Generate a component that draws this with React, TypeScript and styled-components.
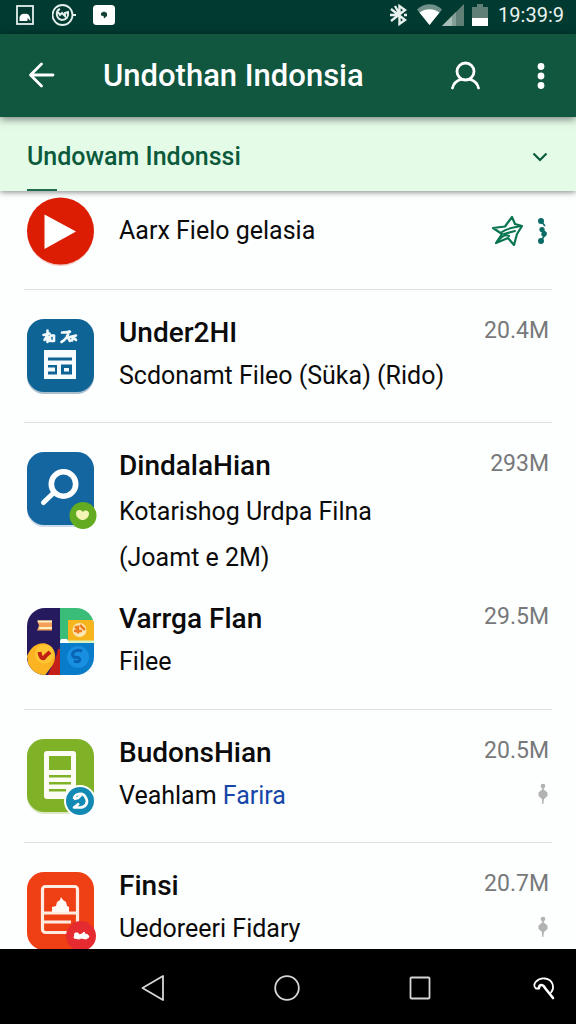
import React from "react";
import styled, { createGlobalStyle } from "styled-components";

const GlobalStyle = createGlobalStyle`
  *, *::before, *::after { box-sizing: border-box; }
  html, body, #root { height: 100%; }
  body { margin: 0; background: #fdfefe; font-family: Roboto, "Liberation Sans", sans-serif; color: #0b0b0b; }
  h1, h2, h3, p, ul { margin: 0; padding: 0; }
  svg { display: block; flex: none; }
`;

const Screen = styled.div`
  height: 100vh;
  display: flex;
  flex-direction: column;
`;

const StatusBar = styled.div`
  flex: none;
  display: flex;
  align-items: center;
  justify-content: space-between;
  height: 34px;
  padding: 0 12px 4px 14px;
  background: #013a30;
  color: #e9f2ef;
`;

const StatusGroup = styled.div<{ $gap: number }>`
  display: flex;
  align-items: center;
  gap: ${(p) => p.$gap}px;
`;

const Clock = styled.span`
  margin-left: 2px;
  font-size: 20px;
  line-height: 28px;
`;

const AppBar = styled.header`
  flex: none;
  position: relative;
  z-index: 2;
  display: flex;
  align-items: center;
  height: 83px;
  padding: 0 14px 0 22px;
  background: #11563f;
  color: #fff;
  box-shadow: 0 2px 8px rgba(0, 0, 0, 0.5);
`;

const AppTitle = styled.h1`
  flex: 1;
  margin-left: 41px;
  font-size: 31px;
  font-weight: 500;
  line-height: 42px;
  white-space: nowrap;
`;

const IconButton = styled.button`
  display: flex;
  align-items: center;
  justify-content: center;
  width: 40px;
  height: 48px;
  padding: 0;
  border: 0;
  background: none;
  color: inherit;
`;

const BarActions = styled.div`
  display: flex;
  gap: 36px;
  margin-right: 1px;
`;

const Section = styled.button`
  flex: none;
  position: relative;
  z-index: 1;
  display: flex;
  align-items: center;
  justify-content: space-between;
  width: 100%;
  height: 74px;
  padding: 6px 28px 0 27px;
  border: 0;
  background: #e4fbe8;
  box-shadow: 0 1px 6px rgba(0, 0, 0, 0.5);
  color: #0b5a3c;
  font: 500 25px/32px Roboto, "Liberation Sans", sans-serif;
  text-align: left;

  &::after {
    content: "";
    position: absolute;
    left: 27px;
    bottom: 0;
    width: 30px;
    height: 2px;
    background: #1f6d4d;
  }
`;

const List = styled.ul`
  flex: 1;
  min-height: 0;
  overflow: hidden;
  padding: 0 24px;
  list-style: none;
`;

const rowPadding = {
  lead: "6px 0 24px",
  open: "20px 0 2px",
  tight: "13px 0 27px",
  plain: "20px 0 26px",
};

const Row = styled.li<{ $kind?: "lead" | "open" | "tight" }>`
  display: flex;
  align-items: ${(p) => (p.$kind === "lead" ? "center" : "flex-start")};
  padding: ${(p) => rowPadding[p.$kind ?? "plain"]};
  border-bottom: ${(p) => (p.$kind === "open" ? "0" : "1px solid #dfe1e2")};
`;

const IconSlot = styled.div<{ $lead?: boolean }>`
  flex: none;
  width: 68px;
  height: ${(p) => (p.$lead ? 68 : 74)}px;
  margin: ${(p) => (p.$lead ? "0" : "9px")} 24px 0 3px;
  svg { overflow: visible; }
`;

const Body = styled.div`
  flex: 1;
  min-width: 0;
  white-space: nowrap;
`;

const Name = styled.h2`
  font-size: 28px;
  font-weight: 500;
  line-height: 46px;
`;

const Detail = styled.p<{ $tall?: boolean }>`
  font-size: 25px;
  line-height: ${(p) => (p.$tall ? 46 : 40)}px;
`;

const DetailLink = styled.a`
  color: #1746a8;
  text-decoration: none;
`;

const Side = styled.div`
  flex: none;
  display: flex;
  flex-direction: column;
  align-items: flex-end;
  padding-right: 3px;
`;

const Size = styled.span`
  font-size: 23px;
  line-height: 42px;
  color: #77797a;
`;

const MarkButton = styled.button`
  display: flex;
  align-items: center;
  justify-content: center;
  width: 12px;
  height: 44px;
  padding: 0;
  border: 0;
  background: none;
  color: #b2b2b2;
`;

const LeadActions = styled.div`
  display: flex;
  gap: 14px;
  padding-right: 3px;
  color: #08754f;
`;

const SlimButton = styled(IconButton)<{ $w: number }>`
  width: ${(p) => p.$w}px;
`;

const NavBar = styled.nav`
  flex: none;
  display: flex;
  justify-content: space-between;
  align-items: center;
  height: 75px;
  padding: 2px 22px 0 133px;
  background: #000;
  color: #d6d6d6;
`;

const PlayIcon = () => (
  <svg width="68" height="68" viewBox="0 0 68 68">
    <circle cx="33.500" cy="36" r="33" fill="#e9a59c" opacity=".6" />
    <circle cx="33.500" cy="34" r="33.500" fill="#dc1d03" />
    <path d="M17.500 17.500v34.500L49 34.500z" fill="#fff" />
  </svg>
);

const Tile = ({ fill, shade }: { fill: string; shade: string }) => (
  <>
    <rect x="0" y="2" width="67" height="73" rx="17" fill={shade} opacity=".35" />
    <rect x="0" y="0" width="67" height="73" rx="17" fill={fill} />
  </>
);

const PanelIcon = () => (
  <svg width="68" height="74" viewBox="0 0 68 74">
    <Tile fill="#0f6496" shade="#0f4670" />
    <g fill="none" stroke="#f2fafc" strokeWidth="2.600" strokeLinecap="round" strokeLinejoin="round">
      <path d="M16.500 16l6-1.500M20.500 11.500v11.500M20 17l-2.500 4M23 17.500v4.500h4v-5.500h-3" />
      <path d="M35 13.500l8-.8M42 12.500c-1 5-3 8-7.500 10.500M40 17l3 5M43 18l6-1.500M46 18.500l-1 3M47 19l2 2" />
    </g>
    <path
      fill="#f6fbfd"
      fillRule="evenodd"
      d="M17 31h32v29H17zM21 38.500v3h24v-3zM21 46v2.500h7v4h-7v3h9v-9.500zM34 45.500v10h11v-10zM37 49h5v3.500h-5z"
    />
  </svg>
);

const SearchIcon = () => (
  <svg width="68" height="74" viewBox="0 0 68 74">
    <Tile fill="#1366a0" shade="#6c9cc8" />
    <circle cx="36.500" cy="32" r="12.200" fill="none" stroke="#fff" strokeWidth="5.600" />
    <path d="M26.500 41L16.500 50.500" stroke="#fff" strokeWidth="5" strokeLinecap="round" />
    <circle cx="56" cy="63.500" r="13.500" fill="#63ab20" />
    <path d="M49 61.500c0-3.500 4-5 7-1.500 2-2.500 6.500-1.500 6 2-.5 4-4 6-6.500 6s-6.500-2.500-6.500-6.500z" fill="#f3f4b6" />
  </svg>
);

const CollageIcon = () => (
  <svg width="68" height="74" viewBox="0 0 68 74">
    <defs>
      <clipPath id="collage"><rect x="0" y="3" width="67" height="67" rx="18" /></clipPath>
    </defs>
    <g clipPath="url(#collage)">
      <rect x="0" y="3" width="34" height="67" fill="#251a5e" />
      <rect x="33" y="3" width="34" height="36" fill="#39bd78" />
      <rect x="33" y="38" width="34" height="32" fill="#087bc9" />
      <path d="M20 72l9-20 2-8h2v28z" fill="#c42018" />
      <path d="M0 51c5-12 15-15 22-11s8 14 3 21l-9 12H3z" fill="#fbb321" />
      <path d="M0 62l10 10H0z" fill="#c94018" />
      <circle cx="17.500" cy="49" r="9.500" fill="#ffc634" />
      <path d="M12.500 47c1 7 4 8 6 4l4.500-4" fill="none" stroke="#c22213" strokeWidth="4" />
      <path d="M10 15.500h15v10H10l2-5z" fill="#f4a05c" />
      <path d="M11 16.500h14M12 23h13" stroke="#fff0c0" strokeWidth="2" />
      <path d="M41 15h26v21H41z" fill="#f7b51d" />
      <path d="M33 35.500h34v2.500H33z" fill="#d8f2c1" />
      <path d="M34 34h6l2 4h-9z" fill="#fff" />
      <circle cx="52.500" cy="25" r="7" fill="#fde7b2" />
      <path d="M47 26h8M51 20.500v8M48 21.500l3 3M53 20l5 5" stroke="#ed7c21" strokeWidth="2.500" />
      <circle cx="51" cy="52" r="11" fill="#188fe0" />
      <path d="M55 46c-5-2-11 1-9 5 1 3 4 0 6 2s0 5-5 3" fill="none" stroke="#0a64b4" strokeWidth="3" />
    </g>
  </svg>
);

const DocumentIcon = () => (
  <svg width="68" height="74" viewBox="0 0 68 74">
    <Tile fill="#80b228" shade="#9ac35a" />
    <path
      fill="#fbfdf4"
      fillRule="evenodd"
      d="M20 12h26a3 3 0 0 1 3 3v42a3 3 0 0 1-3 3H20a3 3 0 0 1-3-3V15a3 3 0 0 1 3-3zM22 17v14h22V17zM22 36v2.500h22V36zM22 43v2.500h22V43zM22 50v2.500h17V50z"
    />
    <circle cx="53" cy="62" r="16" fill="#fff" />
    <circle cx="53" cy="62" r="14" fill="#138ab4" />
    <path
      d="M47 60c0-5 9-8 12-1 3 5-1 9.500-6 9.500h-6l5-4M47 60l4-1 3-3"
      fill="none"
      stroke="#fff"
      strokeWidth="2.600"
      strokeLinejoin="round"
    />
  </svg>
);

const PhotoIcon = () => (
  <svg width="68" height="78" viewBox="0 0 68 78">
    <rect x="0" y="0" width="67" height="78" rx="17" fill="#ef4015" />
    <rect x="15.500" y="14.500" width="35" height="46" rx="3" fill="none" stroke="#ffece0" strokeWidth="3.200" />
    <path d="M16 39.500h34v3H16zM16 48.500h28v3H16z" fill="#ffece0" />
    <path d="M25 40v-5l4-1 1-4 3-2 1-3 2 3 3 2 1 4 2 1v5z" fill="#fffaf5" />
    <circle cx="54" cy="64" r="15" fill="#e62b30" />
    <path d="M48 61h3l1 2 3-1 2-2 1 2 3 1 1 2-3 2-5-1-2 1-5-1z" fill="#fff" stroke="#fff" strokeWidth="1" />
  </svg>
);

const MarkIcon = () => (
  <svg width="10" height="22" viewBox="0 0 10 22" fill="currentColor">
    <circle cx="5" cy="3" r="2.300" />
    <path d="M4.200 3h1.600v3.500l3.700 3v3.500L6 16l-.7 5H4.200L4 16 .5 13V9.500l3.700-3z" />
  </svg>
);

type Item = {
  icon: React.ReactNode;
  name: string;
  lines: React.ReactNode[];
  size: string;
  marked?: boolean;
  kind?: "open" | "tight";
};

const items: Item[] = [
  { icon: <PanelIcon />, name: "Under2HI", lines: ["Scdonamt Fileo (Süka) (Rido)"], size: "20.4M" },
  { icon: <SearchIcon />, name: "DindalaHian", lines: ["Kotarishog Urdpa Filna", "(Joamt e 2M)"], size: "293M", kind: "open" },
  { icon: <CollageIcon />, name: "Varrga Flan", lines: ["Filee"], size: "29.5M", kind: "tight" },
  {
    icon: <DocumentIcon />,
    name: "BudonsHian",
    lines: [<>Veahlam <DetailLink href="#farira">Farira</DetailLink></>],
    size: "20.5M",
    marked: true,
  },
  { icon: <PhotoIcon />, name: "Finsi", lines: ["Uedoreeri Fidary"], size: "20.7M", marked: true },
];

export default function App() {
  return (
    <Screen>
      <GlobalStyle />
      <StatusBar>
        <StatusGroup $gap={16}>
          <svg width="22" height="22" viewBox="0 0 22 22">
            <rect x="3" y="2" width="16" height="18" fill="none" stroke="#e4efec" strokeWidth="1.800" />
            <path d="M5.500 17v-4c1-3 4-4 6-3 3-1 5 3 5 7l-3-3v3z" fill="#fff" />
          </svg>
          <svg width="25" height="24" viewBox="0 0 25 24" fill="none" stroke="#e4efec">
            <circle cx="10.500" cy="12" r="10" strokeWidth="1.800" />
            <path d="M8 6c-5 2-4 10 2 11 4 0 7-3 6-8l-3 1v3l-3-3-2 2-2-3M21 12h3" strokeWidth="2" />
          </svg>
          <svg width="22" height="22" viewBox="0 0 22 22">
            <rect x="0" y="1" width="22" height="20" rx="3.500" fill="#fff" />
            <path d="M8 9l3-1.500 3 1.500v3l-3 2.500-.5-2.500L8 11.500z" fill="#123f36" />
          </svg>
        </StatusGroup>
        <StatusGroup $gap={8}>
          <svg width="20" height="24" viewBox="0 0 20 24" fill="none" stroke="#e8f1ee" strokeWidth="2.400">
            <path d="M2 6l14 11-5.500 4V3L16 7 2 18M6 3l4 7M1 12h7M15 12h3" />
          </svg>
          <StatusGroup $gap={0}>
            <svg width="25" height="22" viewBox="0 0 25 22">
              <path d="M0 5.500C7-1.500 18-1.500 25 5.500L12.500 21z" fill="#6f918a" />
              <path d="M2.500 8.500c6-4.500 14-4.500 20 0L12.500 21z" fill="#fff" />
            </svg>
            <svg width="22" height="22" viewBox="0 0 22 22">
              <path d="M22 0v22H0z" fill="#5f7f77" />
              <path d="M10 12v10H0z" fill="#a9beb8" />
              <path d="M10 12l4-4v14h-4z" fill="#83a098" />
            </svg>
          </StatusGroup>
          <svg width="16" height="22" viewBox="0 0 16 22">
            <path d="M0 3h5V0h6v3h5v19H0z" fill="#5f7f77" />
            <path d="M0 14h16v8H0z" fill="#fff" />
          </svg>
          <Clock>19:39:9</Clock>
        </StatusGroup>
      </StatusBar>

      <AppBar>
        <IconButton aria-label="Back">
          <svg width="28" height="28" viewBox="0 0 28 28" fill="none" stroke="currentColor" strokeWidth="2.800" strokeLinecap="round" strokeLinejoin="round">
            <path d="M25 13H3M13.500 2L2.500 13l11 11" />
          </svg>
        </IconButton>
        <AppTitle>Undothan Indonsia</AppTitle>
        <BarActions>
          <IconButton aria-label="Account">
            <svg width="30" height="30" viewBox="0 0 30 30" fill="none" stroke="currentColor" strokeWidth="2.800" strokeLinecap="round">
              <circle cx="15.500" cy="10.500" r="8.500" />
              <path d="M2.500 27c1-4.500 4.500-7.500 8.500-8.500M28.500 27c-1-4.500-4.500-7.500-8.500-8.500" />
            </svg>
          </IconButton>
          <IconButton aria-label="More options">
            <svg width="8" height="28" viewBox="0 0 8 28" fill="currentColor">
              <circle cx="4" cy="4.500" r="3.400" /><circle cx="4" cy="14" r="3.400" /><circle cx="4" cy="23.500" r="3.400" />
            </svg>
          </IconButton>
        </BarActions>
      </AppBar>

      <Section>
        Undowam Indonssi
        <svg width="16" height="10" viewBox="0 0 16 10" fill="none" stroke="currentColor" strokeWidth="2.200">
          <path d="M1.500 1.500L8 8l6.500-6.500" />
        </svg>
      </Section>

      <List>
        <Row $kind="lead">
          <IconSlot $lead><PlayIcon /></IconSlot>
          <Body><Detail>Aarx Fielo gelasia</Detail></Body>
          <LeadActions>
            <SlimButton $w={32} aria-label="Favourite">
              <svg width="32" height="32" viewBox="0 0 32 32" fill="none" stroke="currentColor" strokeWidth="2.200" strokeLinejoin="round" strokeLinecap="round">
                <path d="M2 13l12-1.500L21 2l3 7 7 2-5 8-3 11-6-7-12 5 6-9z" />
                <path d="M11 17c5-4 11-4 19-6M13 19l11-3M6 27c5-6 8-8 12-6" strokeWidth="2" />
              </svg>
            </SlimButton>
            <SlimButton $w={12} aria-label="Item options">
              <svg width="12" height="28" viewBox="0 0 12 28" fill="#0b6b66">
                <circle cx="4" cy="4" r="3" /><circle cx="5" cy="12.500" r="2.600" /><circle cx="7" cy="17" r="2.700" /><circle cx="4" cy="24" r="3" />
                <path d="M4 4l4 5M5 12l4 4-5 8" stroke="#0b6b66" strokeWidth="1.600" fill="none" />
              </svg>
            </SlimButton>
          </LeadActions>
        </Row>
        {items.map((item) => (
          <Row key={item.name} $kind={item.kind}>
            <IconSlot>{item.icon}</IconSlot>
            <Body>
              <Name>{item.name}</Name>
              {item.lines.map((line, i) => (
                <Detail key={i} $tall={item.kind === "open"}>{line}</Detail>
              ))}
            </Body>
            <Side>
              <Size>{item.size}</Size>
              {item.marked && <MarkButton aria-label={`Options for ${item.name}`}><MarkIcon /></MarkButton>}
            </Side>
          </Row>
        ))}
      </List>

      <NavBar>
        <IconButton aria-label="Back">
          <svg width="24" height="28" viewBox="0 0 24 28" fill="none" stroke="currentColor" strokeWidth="1.800" strokeLinejoin="round">
            <path d="M22 2v24L1.500 14z" />
          </svg>
        </IconButton>
        <IconButton aria-label="Home">
          <svg width="26" height="26" viewBox="0 0 26 26" fill="none" stroke="currentColor" strokeWidth="1.800"><circle cx="13" cy="13" r="11.800" /></svg>
        </IconButton>
        <IconButton aria-label="Recent apps">
          <svg width="22" height="24" viewBox="0 0 22 24" fill="none" stroke="currentColor" strokeWidth="1.800"><rect x="1.500" y="1.500" width="19" height="21" rx="1" /></svg>
        </IconButton>
        <SlimButton $w={20} aria-label="Assist">
          <svg width="24" height="24" viewBox="0 0 24 24" fill="none" stroke="#fff" strokeLinecap="round" strokeLinejoin="round">
            <path d="M7 12.500H4c-5-4 2-11 9-10 8 1 10 9 6 14" strokeWidth="1.800" />
            <path d="M7 12c0-4 4-4 6 0l8 10" strokeWidth="2.600" />
          </svg>
        </SlimButton>
      </NavBar>
    </Screen>
  );
}
